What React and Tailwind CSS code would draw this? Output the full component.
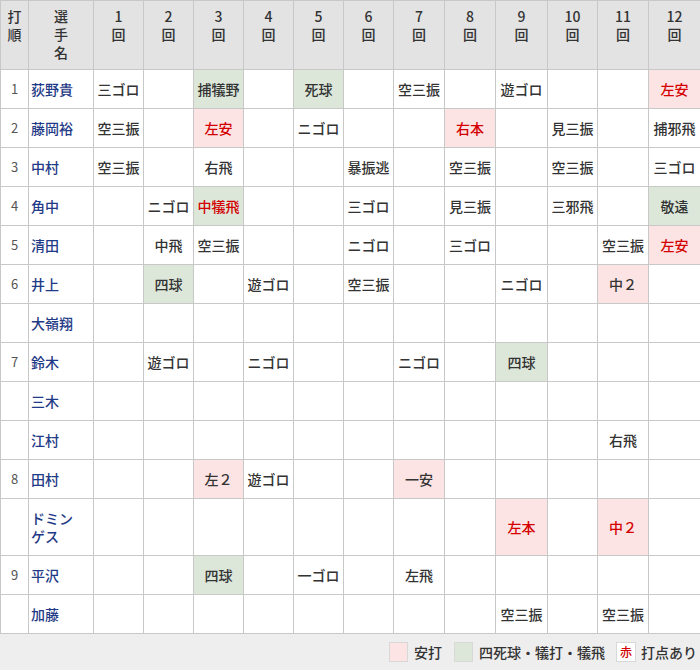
import React from 'react';

const widths = [28, 65, 50, 50, 50, 50, 50, 50, 51, 51, 52, 50, 51, 52];

// p = 安打 (pink), g = 四死球・犠打・犠飛 (green), r = 打点あり (red text)
const rows = [
  { no: '1', name: '荻野貴', at: { 1: ['三ゴロ'], 3: ['捕犠野', 'g'], 5: ['死球', 'g'], 7: ['空三振'], 9: ['遊ゴロ'], 12: ['左安', 'pr'] } },
  { no: '2', name: '藤岡裕', at: { 1: ['空三振'], 3: ['左安', 'pr'], 5: ['ニゴロ'], 8: ['右本', 'pr'], 10: ['見三振'], 12: ['捕邪飛'] } },
  { no: '3', name: '中村', at: { 1: ['空三振'], 3: ['右飛'], 6: ['暴振逃'], 8: ['空三振'], 10: ['空三振'], 12: ['三ゴロ'] } },
  { no: '4', name: '角中', at: { 2: ['ニゴロ'], 3: ['中犠飛', 'gr'], 6: ['三ゴロ'], 8: ['見三振'], 10: ['三邪飛'], 12: ['敬遠', 'g'] } },
  { no: '5', name: '清田', at: { 2: ['中飛'], 3: ['空三振'], 6: ['ニゴロ'], 8: ['三ゴロ'], 11: ['空三振'], 12: ['左安', 'pr'] } },
  { no: '6', name: '井上', at: { 2: ['四球', 'g'], 4: ['遊ゴロ'], 6: ['空三振'], 9: ['ニゴロ'], 11: ['中２', 'p'] } },
  { no: '', name: '大嶺翔', at: {} },
  { no: '7', name: '鈴木', at: { 2: ['遊ゴロ'], 4: ['ニゴロ'], 7: ['ニゴロ'], 9: ['四球', 'g'] } },
  { no: '', name: '三木', at: {} },
  { no: '', name: '江村', at: { 11: ['右飛'] } },
  { no: '8', name: '田村', at: { 3: ['左２', 'p'], 4: ['遊ゴロ'], 7: ['一安', 'p'] } },
  { no: '', name: 'ドミンゲス', at: { 9: ['左本', 'pr'], 11: ['中２', 'pr'] } },
  { no: '9', name: '平沢', at: { 3: ['四球', 'g'], 5: ['一ゴロ'], 7: ['左飛'] } },
  { no: '', name: '加藤', at: { 9: ['空三振'], 11: ['空三振'] } },
];

const innings = [1, 2, 3, 4, 5, 6, 7, 8, 9, 10, 11, 12];

function cellClass(kind) {
  const k = kind || '';
  let bg = 'bg-white';
  if (k.includes('p')) bg = 'bg-[#fde4e4]';
  if (k.includes('g')) bg = 'bg-[#dce7da]';
  const color = k.includes('r') ? 'text-[#d40000]' : 'text-[#333]';
  return `${bg} ${color}`;
}

export default function App() {
  return (
    <div className="w-[700px] h-[670px] bg-[#eeeeee] flex flex-col font-['Meiryo','Noto_Sans_CJK_JP',sans-serif]">
      <table className="table-fixed border-collapse w-[700px] text-[14px]">
        <colgroup>
          {widths.map((w, i) => (
            <col key={i} style={{ width: w }} />
          ))}
        </colgroup>
        <thead>
          <tr className="h-[69px] bg-[#e3e3e3] text-[#333]">
            <th className="border border-[#c8c8c8] align-top pt-[6px] font-medium leading-[18px]">打<br />順</th>
            <th className="border border-[#c8c8c8] align-top pt-[6px] font-medium leading-[18px]">選<br />手<br />名</th>
            {innings.map((n) => (
              <th key={n} className="border border-[#c8c8c8] align-top pt-[6px] font-medium leading-[18px]">
                {n}<br />回
              </th>
            ))}
          </tr>
        </thead>
        <tbody>
          {rows.map((r, i) => (
            <tr key={i} className={r.name === 'ドミンゲス' ? 'h-[57px]' : 'h-[39px]'}>
              <td className="border border-[#c8c8c8] bg-white text-center text-[#555] text-[13px]">{r.no}</td>
              <td className="border border-[#c8c8c8] bg-white pl-[2px] pr-[10px] text-[#1f3a86] font-medium leading-[18px]">{r.name}</td>
              {innings.map((n) => {
                const ab = r.at[n];
                return (
                  <td key={n} className={`border border-[#c8c8c8] text-center font-medium whitespace-nowrap ${cellClass(ab && ab[1])}`}>
                    {ab ? ab[0] : ''}
                  </td>
                );
              })}
            </tr>
          ))}
        </tbody>
      </table>
      <div className="flex-1 flex items-center justify-end pr-[3px] text-[14px] text-[#333] font-medium">
        <span className="w-[19px] h-[20px] bg-[#fde4e4] border border-[#d8d8d8]" />
        <span className="ml-[6px]">安打</span>
        <span className="ml-[12px] w-[19px] h-[20px] bg-[#dce7da] border border-[#d8d8d8]" />
        <span className="ml-[6px]">四死球・犠打・犠飛</span>
        <span className="ml-[11px] w-[20px] h-[20px] bg-white border border-[#d8d8d8] flex items-center justify-center text-[#d40000] text-[12px]">赤</span>
        <span className="ml-[5px]">打点あり</span>
      </div>
    </div>
  );
}
